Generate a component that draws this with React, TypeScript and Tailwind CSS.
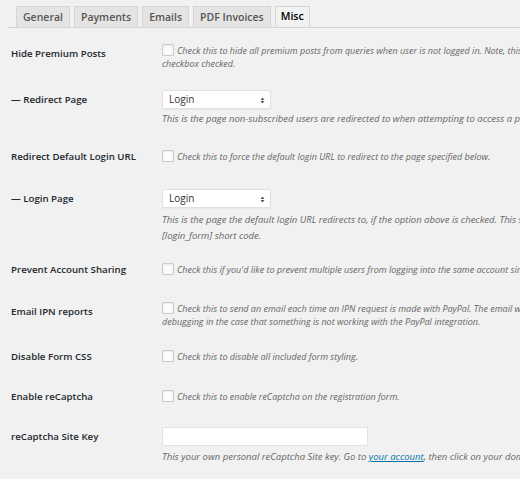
import React from 'react';

const tabs = ['General', 'Payments', 'Emails', 'PDF Invoices', 'Misc'];

function Checkbox() {
  return (
    <input
      type="checkbox"
      className="appearance-none shrink-0 w-[12px] h-[12px] border border-[#cbcbcb] bg-[#fbfbfb] rounded-[1px] shadow-[inset_0_1px_2px_rgba(0,0,0,0.08)] mr-[3px]"
    />
  );
}

function Select() {
  return (
    <div className="relative w-[109px] h-[19px] bg-white border border-[#e0e0e0] rounded-[2px] shadow-[0_1px_1px_rgba(0,0,0,0.04)] flex items-center pl-[6px] text-[10px] not-italic text-[#333]">
      Login
      <svg className="absolute right-[5px] top-[6px]" width="5" height="7" viewBox="0 0 5 7">
        <path d="M0.5 3 L2.5 0.5 L4.5 3 Z M0.5 4 L2.5 6.5 L4.5 4 Z" fill="#555" />
      </svg>
    </div>
  );
}

function Row({ label, labelTop, mt, children }: { label: string; labelTop: string; mt: string; children: React.ReactNode }) {
  return (
    <div className={`flex items-start ${mt}`}>
      <div className={`w-[162px] shrink-0 pl-[11px] text-[9.7px] leading-[14px] font-semibold text-[#23282d] ${labelTop}`}>{label}</div>
      <div className="min-w-0 text-[9px] leading-[13px] italic text-[#666]">{children}</div>
    </div>
  );
}

export default function App() {
  return (
    <div className="w-[520px] h-[479px] overflow-hidden bg-[#f1f1f1] font-['Open_Sans',sans-serif]">
      {/* Tabs */}
      <div className="mt-[6px] ml-[8px] pl-[8px] flex gap-[4px] border-b border-[#d5d5d5]">
        {tabs.map((t) => (
          <div
            key={t}
            className={
              t === 'Misc'
                ? 'h-[21px] px-[5px] -mb-px border border-[#d5d5d5] border-b-[#f1f1f1] bg-[#f1f1f1] text-[10.5px] leading-[19px] font-semibold text-[#000]'
                : 'h-[21px] px-[6px] border border-[#d5d5d5] border-b-0 bg-[#e4e4e4] text-[10.5px] leading-[20px] font-semibold text-[#555]'
            }
          >
            {t}
          </div>
        ))}
      </div>

      <div className="flex flex-col whitespace-nowrap">
        <Row label="Hide Premium Posts" labelTop="pt-[3px]" mt="mt-[16px]">
          <div className="flex items-start">
            <Checkbox />
            <span>Check this to hide all premium posts from queries when user is not logged in. Note, this will not affect users with this</span>
          </div>
          <div>checkbox checked.</div>
        </Row>

        <Row label="— Redirect Page" labelTop="pt-[3px]" mt="mt-[20px]">
          <Select />
          <p className="mt-[3px] text-[9.5px]">This is the page non-subscribed users are redirected to when attempting to access a premium post.</p>
        </Row>

        <Row label="Redirect Default Login URL" labelTop="pt-0" mt="mt-[25px]">
          <div className="flex items-start">
            <Checkbox />
            <span>Check this to force the default login URL to redirect to the page specified below.</span>
          </div>
        </Row>

        <Row label="— Login Page" labelTop="pt-[3px]" mt="mt-[25px]">
          <Select />
          <p className="mt-[4px] leading-[16px] text-[9.5px]">This is the page the default login URL redirects to, if the option above is checked. This should be the page that contains the</p>
          <p className="leading-[16px] text-[9.5px]">[login_form] short code.</p>
        </Row>

        <Row label="Prevent Account Sharing" labelTop="pt-0" mt="mt-[19px]">
          <div className="flex items-start">
            <Checkbox />
            <span>Check this if you'd like to prevent multiple users from logging into the same account simultaneously.</span>
          </div>
        </Row>

        <Row label="Email IPN reports" labelTop="pt-[3px]" mt="mt-[25px]">
          <div className="flex items-start">
            <Checkbox />
            <span>Check this to send an email each time an IPN request is made with PayPal. The email will contain a list of all data sent. This is useful for</span>
          </div>
          <div>debugging in the case that something is not working with the PayPal integration.</div>
        </Row>

        <Row label="Disable Form CSS" labelTop="pt-0" mt="mt-[22px]">
          <div className="flex items-start">
            <Checkbox />
            <span>Check this to disable all included form styling.</span>
          </div>
        </Row>

        <Row label="Enable reCaptcha" labelTop="pt-0" mt="mt-[26px]">
          <div className="flex items-start">
            <Checkbox />
            <span>Check this to enable reCaptcha on the registration form.</span>
          </div>
        </Row>

        <Row label="reCaptcha Site Key" labelTop="pt-[3px]" mt="mt-[23px]">
          <input type="text" className="block w-[206px] h-[19px] bg-white border border-[#e3e3e3] rounded-[1px] outline-none" />
          <p className="mt-[4px] text-[9.5px]">
            This your own personal reCaptcha Site key. Go to{' '}
            <a href="#" className="text-[#0073aa] underline">your account</a>, then click on your domain (or add a new one) to find your site key.
          </p>
        </Row>
      </div>
    </div>
  );
}
